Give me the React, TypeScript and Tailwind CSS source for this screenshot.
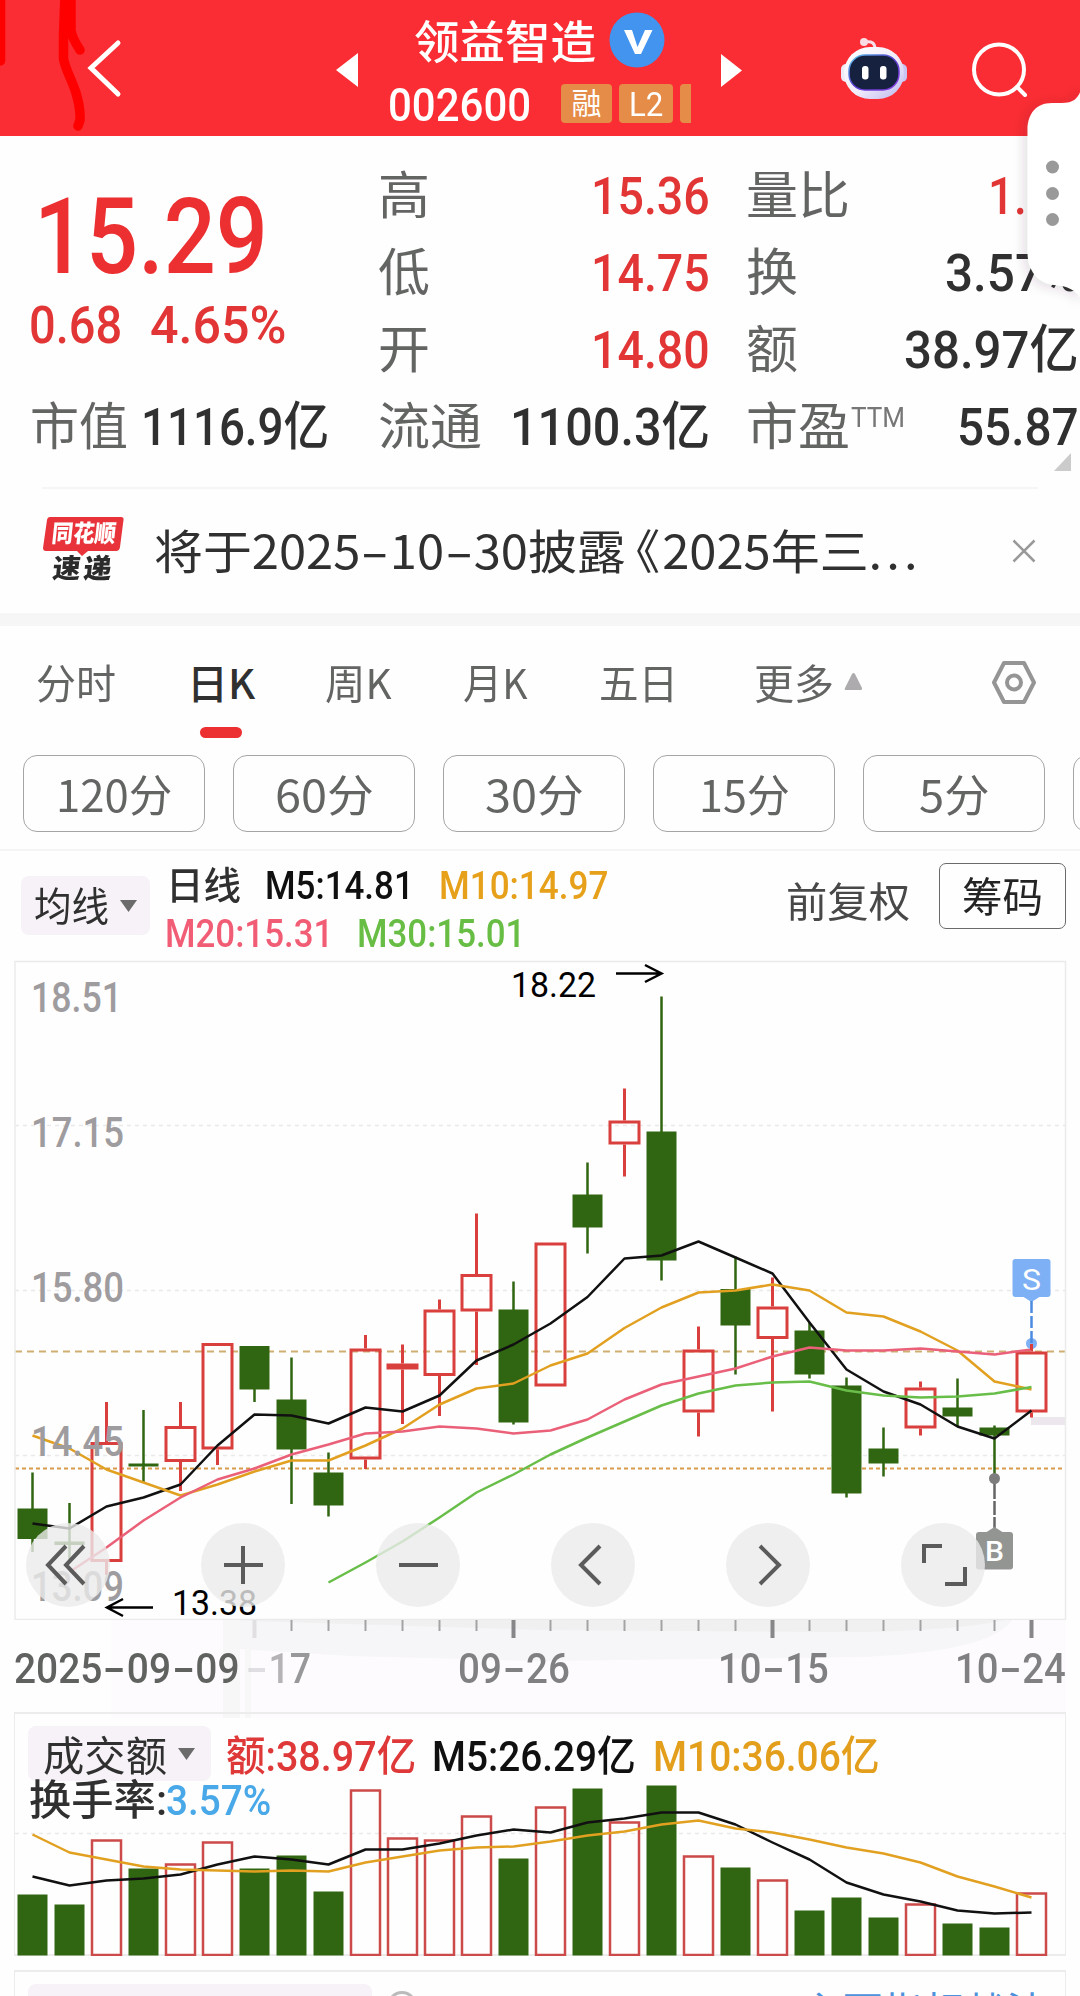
import React, { useLayoutEffect, useRef, useState } from "react";

const NUM = "font-['Roboto','Noto_Sans_CJK_SC',sans-serif]";

/* Text squeezed or stretched horizontally to an exact width. */
function Fit({ w, className = "", children }: { w: number; className?: string; children: React.ReactNode }) {
  const ref = useRef<HTMLSpanElement>(null);
  const [k, setK] = useState(1);
  useLayoutEffect(() => {
    if (ref.current) setK(w / ref.current.offsetWidth);
  }, [w]);
  return (
    <span className={"flex shrink-0 whitespace-nowrap " + className} style={{ width: w }}>
      <span ref={ref} className="block shrink-0 origin-left" style={{ transform: `scaleX(${k})` }}>
        {children}
      </span>
    </span>
  );
}

const Dash = () => <span className="mx-[6px] inline-block scale-x-[1.7]">-</span>;

type Candle = [up: 0 | 1, top: number, bottom: number, high: number, low: number];
const candles: Candle[] = [
  [0, 1508.5, 1539, 1472.5, 1552],
  [0, 1541.5, 1545, 1503, 1560],
  [1, 1442, 1562, 1402, 1575],
  [0, 1463.5, 1466.5, 1410, 1482],
  [1, 1426, 1462, 1402, 1491],
  [1, 1343, 1449.5, 1343, 1465],
  [0, 1346, 1389.5, 1346, 1402],
  [0, 1399.5, 1449.5, 1357.5, 1504],
  [0, 1472.5, 1505.5, 1452.5, 1516.5],
  [1, 1348.5, 1459.5, 1335, 1469],
  [1, 1363.5, 1369.5, 1344.5, 1424],
  [1, 1309.5, 1376, 1299.5, 1416],
  [1, 1274, 1311.5, 1213.5, 1365],
  [0, 1309.5, 1422.5, 1281.5, 1424.5],
  [1, 1242.5, 1386.5, 1242.5, 1386.5],
  [0, 1194.5, 1227.5, 1162.5, 1253.5],
  [1, 1120.5, 1144.5, 1088.5, 1176.5],
  [0, 1131.5, 1260.5, 996.5, 1280.5],
  [1, 1349.5, 1412.5, 1326.5, 1436.5],
  [0, 1289, 1325.5, 1256.5, 1374.5],
  [1, 1306.5, 1339, 1277.5, 1411.5],
  [0, 1330.5, 1374.5, 1323, 1378.5],
  [0, 1385.5, 1493.5, 1377.5, 1497.5],
  [0, 1448.5, 1463.5, 1427.5, 1476.5],
  [1, 1387.5, 1428.5, 1381.5, 1435.5],
  [0, 1407.5, 1416.5, 1378.5, 1426.5],
  [0, 1427.5, 1435.5, 1425.5, 1478],
  [1, 1351.5, 1412.5, 1343, 1417.5],
];
const m5 = [1523.5, 1528.5, 1506.5, 1497.5, 1484.5, 1445.5, 1414.5, 1415.5, 1423.5, 1407.5, 1411.5, 1395.5, 1360.5, 1344.5, 1323.5, 1297, 1258.5, 1255.5, 1241.5, 1257.5, 1273.5, 1322.5, 1369.5, 1391.5, 1404.5, 1426.5, 1438.5, 1410.5];
const m10 = [1435.5, 1448.5, 1469.5, 1482.5, 1495.5, 1484.5, 1471.5, 1460.5, 1460.5, 1445.5, 1428.5, 1404.5, 1388.5, 1383.5, 1365.5, 1353.5, 1328, 1307.5, 1292.5, 1290.5, 1284.5, 1290.5, 1312.5, 1316.5, 1331.5, 1350.5, 1381.5, 1389.5];
const m20 = [1572, 1547.5, 1520.5, 1497.5, 1479.5, 1468.5, 1454.5, 1444.5, 1433.5, 1431.5, 1426.5, 1428.5, 1433.5, 1430.5, 1419.5, 1399.5, 1384.5, 1376.5, 1368.5, 1356.5, 1347.5, 1350.5, 1350.5, 1348.5, 1351.5, 1354.5, 1349.5];
const m30 = [1582.5, 1562.5, 1541.5, 1517.5, 1492.5, 1474.5, 1454.5, 1437.5, 1421.5, 1405.5, 1393.5, 1385.5, 1382.5, 1381.5, 1390.5, 1395.5, 1397.5, 1396.5, 1393.5, 1387];
const volTops = [1894.5, 1904.5, 1839.5, 1868.5, 1863.5, 1841.5, 1868.5, 1855.5, 1891.5, 1789.5, 1837.5, 1839.5, 1815.5, 1858.5, 1806.5, 1788.5, 1821.5, 1785.5, 1855.5, 1867.5, 1879.5, 1910.5, 1897.5, 1917.5, 1903.5, 1923.5, 1927.5, 1892.5];
const v5 = [1876.5, 1885.5, 1880.5, 1878.5, 1874.5, 1864.5, 1856.5, 1859.5, 1864.5, 1849.5, 1849.5, 1843.5, 1835.5, 1829.5, 1832.5, 1822.5, 1818.5, 1812.5, 1812.5, 1824.5, 1842.5, 1859.5, 1882.5, 1894.5, 1901.5, 1910.5, 1913.5, 1912.5];
const v10 = [1834.5, 1852.5, 1859.5, 1866.5, 1869.5, 1870.5, 1871.5, 1870.5, 1871.5, 1862.5, 1856.5, 1850.5, 1847.5, 1846.5, 1841.5, 1835.5, 1831.5, 1824.5, 1820.5, 1828.5, 1832.5, 1839.5, 1847.5, 1853.5, 1862.5, 1876.5, 1886.5, 1897.5];

const RED = "#d93f3d";
const GREEN = "#306611";
const cx = (i: number) => 32.5 + 37 * i;
const line = (ys: number[], from = 0) => ys.map((y, i) => `${cx(i + from)},${y}`).join(" ");

function Header() {
  return (
    <header className="relative flex h-[136px] shrink-0 overflow-hidden bg-[#f92d33] text-white">
      <svg className="absolute left-0 top-0" width="100" height="136" fill="none" stroke="#ff0000" strokeWidth="9.5" strokeLinecap="round" strokeLinejoin="round">
        <path d="M0.5 -5V61M65 -5L63.500 35V59C66 71 72 80 76 93C79 103 80.500 112 80 120L78 126M71 -5V31C73 40 77 45 80 50" />
        <path d="M68 -5V30" strokeWidth="12" />
      </svg>
      <svg className="relative ml-[84px] mt-[36px] shrink-0" width="42" height="66" fill="none" stroke="#fff" strokeWidth="5" strokeLinecap="round">
        <path d="M34 7L7 32L34 58" />
      </svg>
      <svg className="ml-[210px] mt-[53px] shrink-0" width="22" height="34" fill="#fff"><path d="M0 17L22 0V34Z" /></svg>
      <div className="ml-[30px] flex w-[306px] shrink-0 flex-col">
        <div className="flex h-[68px] items-center pl-[26px] pt-[10px]">
          <Fit w={182} className={NUM + " mt-[10px] text-[45px] font-medium leading-[50px]"}>领益智造</Fit>
          <svg className="ml-[13px]" width="56" height="57" viewBox="0 0 56 57">
            <circle cx="28" cy="29" r="27.500" fill="#4294ee" />
            <path d="M15 19H23L28.500 36L36 19H43.500L32 43H26Z" fill="#fff" />
          </svg>
        </div>
        <div className="mt-[16px] flex h-[39px] items-center">
          <Fit w={143} className={NUM + " mt-[2px] text-[47px] font-medium leading-[39px]"}>002600</Fit>
          <span className={NUM + " ml-[30px] flex h-[39px] w-[51px] items-center justify-center rounded-[4px] bg-[#e58c48] text-[30px] leading-none"}>融</span>
          <span className={NUM + " ml-[7px] flex h-[39px] w-[54px] items-center justify-center rounded-[4px] bg-[#e58c48] text-[34px] leading-none"}><Fit w={34}>L2</Fit></span>
          <span className="ml-[7px] h-[39px] w-[11px] rounded-l-[4px] bg-[#e58c48]" />
        </div>
      </div>
      <svg className="ml-[27px] mt-[54px] shrink-0" width="22" height="33" fill="#fff"><path d="M0 0L21 16.500L0 33Z" /></svg>
      <svg className="ml-[97px] mt-[36px] shrink-0" width="68" height="66" viewBox="0 0 68 66">
        <defs>
          <linearGradient id="head" x1="0" y1="0" x2="1" y2="1"><stop offset="0" stopColor="#fff" /><stop offset="0.55" stopColor="#f1ecfa" /><stop offset="1" stopColor="#b9b5ee" /></linearGradient>
          <linearGradient id="rim" x1="0" y1="0" x2="1" y2="1"><stop offset="0" stopColor="#57c6e8" /><stop offset="0.5" stopColor="#5a3bd0" /><stop offset="1" stopColor="#8a3fe0" /></linearGradient>
        </defs>
        <path d="M25 6Q35 4 35 13" fill="none" stroke="#f6dfe8" strokeWidth="3" />
        <circle cx="24" cy="6" r="4" fill="#fbdbe3" />
        <rect x="1" y="28" width="10" height="18" rx="5" fill="#eeeaf8" />
        <rect x="57" y="28" width="10" height="18" rx="5" fill="#c9c4f2" />
        <rect x="4" y="11" width="60" height="52" rx="26" fill="url(#head)" />
        <rect x="9" y="19" width="50" height="35" rx="16" fill="#16203f" stroke="url(#rim)" strokeWidth="1.500" />
        <rect x="22" y="30" width="6.500" height="13.500" rx="3" fill="#fff" />
        <rect x="40" y="30" width="6.500" height="13.500" rx="3" fill="#fff" />
      </svg>
      <svg className="ml-[63px] mt-[40px] shrink-0" width="60" height="60" fill="none" stroke="#fff" strokeWidth="4" strokeLinecap="round">
        <circle cx="28" cy="29.500" r="25" /><path d="M46 47L54 55" />
      </svg>
    </header>
  );
}

const label = NUM + " text-[#636563] text-[51px]";
const big = NUM + " text-[52px] font-medium";

function Row({ name, value, w, red, left }: { name: string; value: string; w: number; red?: boolean; left?: React.ReactNode }) {
  return (
    <div className="flex h-[77px] items-center justify-between leading-[77px]">
      <span className="flex"><Fit w={name.length * 52} className={label + " -ml-px"}>{name}</Fit>{left}</span>
      <Fit w={w} className={big + (red ? " text-[#e23535]" : " text-[#303030]")}>{value}</Fit>
    </div>
  );
}

function Quote() {
  return (
    <section className="flex h-[351px] shrink-0 overflow-hidden pt-[22px]">
      <div className="w-[379px] shrink-0 pl-[30px]">
        <Fit w={234} className={NUM + " ml-[4px] mt-[28px] h-[104px] text-[105px] font-medium leading-[104px] text-[#ec3031]"}>15.29</Fit>
        <div className="-ml-px mt-px flex h-[70px] items-center leading-[70px] text-[#e23535]">
          <Fit w={93} className={big}>0.68</Fit>
          <Fit w={136} className={big + " ml-[28px]"}>4.65%</Fit>
        </div>
        <div className="mt-[28px] flex h-[77px] items-center leading-[77px]">
          <Fit w={98} className={label}>市值</Fit>
          <Fit w={188} className={big + " ml-[13px] text-[#303030]"}>1116.9亿</Fit>
        </div>
      </div>
      <div className="w-[331px] shrink-0">
        <Row name="高" value="15.36" w={119} red />
        <Row name="低" value="14.75" w={119} red />
        <Row name="开" value="14.80" w={119} red />
        <Row name="流通" value="1100.3亿" w={200} />
      </div>
      <div className="ml-[37px] w-[332px] shrink-0">
        <Row name="量比" value="1.42" w={91} red />
        <Row name="换" value="3.57%" w={134} />
        <Row name="额" value="38.97亿" w={175} />
        <Row name="市盈" value="55.87" w={122} left={<Fit w={54} className={NUM + " -mt-[10px] ml-[1px] text-[28px] text-[#777]"}>TTM</Fit>} />
      </div>
    </section>
  );
}

function News() {
  return (
    <section className="relative mx-[42px] flex h-[126px] shrink-0 items-center border-t-2 border-[#f6f6f6]">
      <svg className="absolute -top-[36px] left-[1012px]" width="18" height="19" fill="#cbcbcb"><path d="M17 0V18H0Z" /></svg>
      <div className="relative -mt-[2px] h-[70px] w-[84px]">
        <svg className="absolute left-0 top-0" width="84" height="44" fill="#e8333a">
          <path d="M8 2H79Q82 2 81.500 5L78 32Q77.500 36 74 36H46L40 41L35 36H4Q1 36 1 33L5 5Q5.500 2 8 2Z" />
        </svg>
        <div className="relative flex h-[37px] -skew-x-6 items-center justify-center pt-[1px]">
          <Fit w={64} className={NUM + " text-[24px] font-black leading-[32px] text-white"}>同花顺</Fit>
        </div>
        <div className="flex h-[30px] -skew-x-6 items-center justify-center pt-[4px]">
          <Fit w={62} className={NUM + " text-[27px] font-black leading-[30px] tracking-[3px] text-[#2b2b2b]"}>速递</Fit>
        </div>
      </div>
      <Fit w={768} className="-mt-[5px] ml-[28px] font-['Noto_Sans_CJK_SC',sans-serif] text-[47px] leading-[60px] text-[#303030]">
        将于2025<Dash />10<Dash />30披露<span className="-ml-[14px] mr-[2px]">《</span>2025年三<span className="tracking-[4px]">...</span>
      </Fit>
      <svg className="ml-auto mr-[2px]" width="24" height="24" fill="none" stroke="#999" strokeWidth="2.500"><path d="M1.500 1.500L22.500 22.500M22.500 1.500L1.500 22.500" /></svg>
    </section>
  );
}

const tab = "font-['Noto_Sans_CJK_SC',sans-serif] text-[41px] leading-[60px]";

function Tabs() {
  return (
    <nav className="flex h-[129px] shrink-0 pl-[36px] pt-[25px] text-[#636563]">
      <Fit w={80} className={tab}>分时</Fit>
      <div className="relative ml-[71px]">
        <Fit w={68} className={tab + " font-medium text-[#303030]"}>日K</Fit>
        <span className="absolute left-[13px] top-[76px] h-[11px] w-[42px] rounded-full bg-[#ec3031]" />
      </div>
      <Fit w={67} className={tab + " ml-[70px]"}>周K</Fit>
      <Fit w={65} className={tab + " ml-[71px]"}>月K</Fit>
      <Fit w={79} className={tab + " ml-[71px]"}>五日</Fit>
      <Fit w={80} className={tab + " ml-[76px]"}>更多</Fit>
      <svg className="ml-[10px] mt-[21px]" width="20" height="20" fill="#aeabae"><path d="M8 2Q9.500 0 11 2L18 16Q18.500 18 17 18H2Q0 18 1 16Z" /></svg>
      <svg className="ml-[127px] mt-[9px]" width="46" height="46" fill="none" stroke="#959595" strokeWidth="4" strokeLinejoin="round">
        <path d="M13 3H33L43 22.500L33 42H13L3 22.500Z" /><circle cx="23" cy="22.500" r="7" />
      </svg>
    </nav>
  );
}

function Pills() {
  const items: [string, number][] = [["120分", 116], ["60分", 99], ["30分", 99], ["15分", 91], ["5分", 70]];
  return (
    <div className="flex h-[96px] shrink-0 gap-[28px] overflow-hidden border-b-2 border-[#f5f5f5] pl-[23px]">
      {items.map(([t, w]) => (
        <div key={t} className="flex h-[77px] w-[182px] shrink-0 justify-center rounded-[14px] border-[1.5px] border-[#a5a5a5] pt-[2px] font-['Noto_Sans_CJK_SC',sans-serif] text-[44px] leading-[70px] text-[#636563]">
          <Fit w={w}>{t}</Fit>
        </div>
      ))}
      <div className="h-[77px] w-[182px] shrink-0 rounded-[14px] border-[1.5px] border-[#a5a5a5]" />
    </div>
  );
}

const Caret = () => <svg width="17" height="12" fill="#6b6b6b"><path d="M0 0H17L8.500 12Z" /></svg>;

function MaBar() {
  const t = NUM + " text-[38px] font-medium leading-[46px]";
  return (
    <div className="flex h-[109px] shrink-0">
      <div className="ml-[21px] mt-[25px] flex h-[59px] w-[129px] items-center rounded-[8px] bg-[#f6f2f7] pl-[13px]">
        <Fit w={75} className={NUM + " mr-[11px] mt-[5px] text-[40px] leading-[50px] text-[#303030]"}>均线</Fit>
        <Caret />
      </div>
      <div className="ml-[16px] mt-[12px] w-[460px]">
        <div className="flex h-[47px]">
          <Fit w={75} className={t + " text-[#303030]"}>日线</Fit>
          <Fit w={149} className={t + " ml-[24px] text-[#101010]"}>M5:14.81</Fit>
          <Fit w={169} className={t + " ml-[25px] text-[#e6a01a]"}>M10:14.97</Fit>
        </div>
        <div className="flex h-[47px] pt-px">
          <Fit w={168} className={t + " -ml-px text-[#f25d76]"}>M20:15.31</Fit>
          <Fit w={168} className={t + " ml-[24px] text-[#68bd45]"}>M30:15.01</Fit>
        </div>
      </div>
      <Fit w={124} className={NUM + " ml-[160px] mt-[25px] text-[41px] leading-[54px] text-[#484848]"}>前复权</Fit>
      <div className={NUM + " ml-[29px] mt-[12px] flex h-[66px] w-[127px] justify-center rounded-[7px] border-[1.5px] border-[#6a6a6a] pt-px text-[41px] leading-[66px] text-[#242424]"}>
        <Fit w={81}>筹码</Fit>
      </div>
    </div>
  );
}

function Glyph({ x, y, w, size, fill, weight = 400, children }: { x: number; y: number; w: number; size: number; fill: string; weight?: number; children: string }) {
  return (
    <text x={x} y={y} textLength={w} lengthAdjust="spacingAndGlyphs" fontSize={size} fill={fill} fontWeight={weight} className={NUM}>
      {children}
    </text>
  );
}

const controls = [
  "M-2 -19L-20 0L-2 19M16 -19L-2 0L16 19",
  "M-19 0H20M0 -19V19",
  "M-19 0H20",
  "M7 -19L-12 0L7 19",
  "M-8 -19L11 0L-8 19",
  "M-1 -19H-19V-2M22 2V19H2",
];

function KChart() {
  return (
    <div className="relative h-[660px] shrink-0">
      <svg className="block" width="1080" height="660" viewBox="0 960 1080 660">
        <path d="M15 1125.500H1066M15 1290.500H1066M15 1455.500H1066" stroke="#e9e9e9" strokeWidth="1.500" strokeDasharray="4 4" />
        <path d="M15 1351.500H1066" stroke="#cfae72" strokeWidth="1.800" strokeDasharray="7 5" />
        <path d="M15 1468.500H1066" stroke="#d79a4b" strokeWidth="2" strokeDasharray="4 3" />
        <rect x="1031" y="1417" width="34" height="8" fill="#ebe7ec" />
        {candles.map(([up, t, b, h, l], i) => {
          const c = cx(i);
          if (!up)
            return (
              <g key={i} fill={GREEN}>
                <rect x={c - 1.25} y={h} width="2.500" height={l - h} />
                <rect x={c - 15} y={t} width="30" height={b - t} />
              </g>
            );
          return (
            <g key={i} stroke={RED} strokeWidth="3" fill="none">
              <path d={`M${c} ${h}V${t}M${c} ${b}V${l}`} />
              <rect x={c - 14.5} y={t + 1.5} width="29" height={b - t - 3} fill={b - t < 8 ? RED : "none"} />
            </g>
          );
        })}
        <g fill="none" strokeWidth="2.500" strokeLinejoin="round">
          <polyline points={line(m5)} stroke="#111" />
          <polyline points={line(m10)} stroke="#e2a021" />
          <polyline points={line(m20, 1)} stroke="#ea6078" />
          <polyline points={line(m30, 8)} stroke="#68be48" />
        </g>
        <Glyph x={31} y={1012} w={91} size={42} weight={500} fill="#9e9c9e">18.51</Glyph>
        <Glyph x={31} y={1147} w={93} size={42} weight={500} fill="#9e9c9e">17.15</Glyph>
        <Glyph x={31} y={1301.5} w={93} size={42} weight={500} fill="#9e9c9e">15.80</Glyph>
        <Glyph x={31} y={1455.5} w={93} size={42} weight={500} fill="#9e9c9e">14.45</Glyph>
        <Glyph x={31} y={1600.5} w={93} size={42} weight={500} fill="#9e9c9e">13.09</Glyph>
        <Glyph x={511} y={996.5} w={85} size={35.5} fill="#000">18.22</Glyph>
        <Glyph x={172} y={1615} w={85} size={35.5} fill="#000">13.38</Glyph>
        <path d="M616 973.500H661M645 965L661.500 973.500L645 982M153 1607.500H108M123 1599L107 1607.500L123 1616" fill="none" stroke="#000" strokeWidth="2.500" />
        <g fill="#7eb0f6">
          <rect x="1012.500" y="1259" width="38" height="38" rx="3" /><path d="M1022 1296H1041L1031.500 1302Z" />
          <circle cx="1031.500" cy="1343.500" r="5.500" />
        </g>
        <path d="M1031.500 1301V1343" stroke="#4b8be0" strokeWidth="2.500" strokeDasharray="12 3" />
        <path d="M1031.500 1344V1350" stroke={RED} strokeWidth="3" />
        <Glyph x={1022} y={1289.5} w={19} size={29} fill="#fff">S</Glyph>
        <path d="M994.500 1479V1530" stroke="#666" strokeWidth="2.500" strokeDasharray="20 2 14 2" />
        <circle cx="994.500" cy="1478.500" r="5.500" fill="#7d7d7d" />
        <g fill="#939593"><rect x="976" y="1532" width="37" height="37.500" rx="3" /><path d="M985 1533L994.500 1527L1004 1533Z" /></g>
        <Glyph x={985} y={1561} w={19} size={28} weight={500} fill="#fff">B</Glyph>
        <rect x="15" y="961.500" width="1050.500" height="658" fill="none" stroke="#ebebeb" strokeWidth="1.500" />
      </svg>
      <div className="absolute left-[26px] top-[563px] flex gap-[91px]">
        {controls.map((d, i) => (
          <button key={i} className="flex size-[84px] items-center justify-center rounded-full bg-[#ebebeb]/80">
            <svg width="60" height="60" viewBox="-30 -30 60 60" fill="none" stroke="#5b5b5b" strokeWidth="4"><path d={d} /></svg>
          </button>
        ))}
      </div>
    </div>
  );
}

function Axis() {
  const t = NUM + " text-[42px] font-medium leading-[60px]";
  return (
    <div className="relative h-[92px] shrink-0">
      <svg className="absolute left-0 top-0" width="1080" height="98" viewBox="0 1620 1080 98">
        <path d="M111 1620H1066V1718H111Z" fill="#fefbff" />
        <path d="M223 1620H1012Q990 1652 860 1657L540 1661L350 1656L223 1648Z" fill="#f6f5f7" />
        <path d="M223 1620H1005Q960 1630 860 1632L540 1630Z" fill="#f0f0f1" />
        <path d="M223 1620H240V1718H223ZM245 1650H251V1718H245Z" fill="#f6f7f6" />
        {Array.from({ length: 22 }, (_, k) => k + 6).map((i) =>
          i % 7 === 6 ? (
            <rect key={i} x={cx(i) - 2} y="1620" width="4" height="18" fill={i === 6 ? "#e2dfe2" : "#87878a"} />
          ) : (
            <rect key={i} x={cx(i) - 1} y="1620" width="2" height="11" fill="#a3a3a5" />
          )
        )}
      </svg>
      <div className="relative flex pt-[19px]">
        <Fit w={226} className={t + " ml-[14px] text-[#606260]"}>2025<Dash />09<Dash />09</Fit>
        <Fit w={66} className={t + " ml-[5px] text-[#b5b3b6]"}><span className="opacity-40"><Dash /></span>1<span className="text-[#98979a]">7</span></Fit>
        <Fit w={112} className={t + " ml-[147px] text-[#808083]"}>09<Dash />26</Fit>
        <Fit w={111} className={t + " ml-[148px] text-[#808083]"}>10<Dash />15</Fit>
        <Fit w={111} className={t + " ml-[126px] text-[#808083]"}>10<Dash />24</Fit>
      </div>
    </div>
  );
}

function Volume() {
  const t = NUM + " text-[42px] font-medium leading-[56px]";
  return (
    <div className="relative mx-[14px] h-[244px] w-[1052px] shrink-0 border-x-[1.5px] border-y-2 border-[#ececec]">
      <svg className="absolute -left-[15px] -top-[2px]" width="1080" height="244" viewBox="0 1712 1080 244">
        <path d="M15 1833.500H1066" stroke="#e9e9e9" strokeWidth="1.500" strokeDasharray="4 4" />
        {volTops.map((y, i) =>
          candles[i][0] ? (
            <rect key={i} x={cx(i) - 14.5} y={y + 1} width="29" height={1954.5 - y - 0.5} fill="none" stroke="#cc4a49" strokeWidth="2.500" />
          ) : (
            <rect key={i} x={cx(i) - 15} y={y} width="30" height={1955.5 - y} fill={GREEN} />
          )
        )}
        <g fill="none" strokeWidth="2.500" strokeLinejoin="round">
          <polyline points={line(v5)} stroke="#111" />
          <polyline points={line(v10)} stroke="#e2a021" />
        </g>
      </svg>
      <div className="relative flex pl-[13px] pt-[12px]">
        <div className="flex h-[55px] w-[183px] items-center rounded-[8px] bg-[#f6f2f7] pl-[15px]">
          <Fit w={124} className={NUM + " mr-[11px] mt-[6px] text-[41px] font-normal leading-[50px] text-[#303030]"}>成交额</Fit>
          <Caret />
        </div>
        <Fit w={190} className={t + " ml-[15px] mt-[3px] text-[#df3838]"}>额:38.97亿</Fit>
        <Fit w={204} className={t + " ml-[16px] mt-[3px] text-[#101010]"}>M5:26.29亿</Fit>
        <Fit w={227} className={t + " ml-[17px] mt-[3px] text-[#e39f1c]"}>M10:36.06亿</Fit>
      </div>
      <div className="relative -mt-[12px] flex pl-[14px]">
        <Fit w={138} className={t + " text-[#303030]"}>换手率:</Fit>
        <Fit w={105} className={t + " -ml-px text-[#48a8e8]"}>3.57%</Fit>
      </div>
    </div>
  );
}

function NextPanel() {
  return (
    <div className="mx-[14px] mt-[14px] flex h-[26px] shrink-0 overflow-hidden border-x-[1.5px] border-t-2 border-[#ececec] pl-[13px]">
      <div className="mt-[12px] h-[40px] w-[344px] shrink-0 rounded-t-[8px] bg-[#f6f2f7]" />
      <svg className="ml-[15px] mt-[18px] shrink-0" width="30" height="30" fill="none" stroke="#bbb" strokeWidth="3"><circle cx="15" cy="16" r="13.500" /></svg>
      <span className={NUM + " ml-[384px] mt-[16px] shrink-0 text-[41px] leading-[50px] text-[#4d92dc]"}>主页指标战法</span>
    </div>
  );
}

function SideHandle() {
  return (
    <svg className="absolute left-[990px] top-[70px]" width="90" height="250" viewBox="990 70 90 250">
      <defs><filter id="soft" x="-50%" y="-20%" width="200%" height="140%"><feDropShadow dx="-3" dy="2" stdDeviation="6" floodColor="#443344" floodOpacity="0.16" /></filter></defs>
      <path filter="url(#soft)" d="M1082 86C1079 99 1073 103 1062 103H1052C1036 103 1027.500 114 1027.500 130V252C1027.500 270 1037 283 1054 285C1068 286 1076 290 1082 300Z" fill="#fff" />
      <g fill="#999"><circle cx="1052.500" cy="167" r="6.500" /><circle cx="1052.500" cy="193.500" r="6.500" /><circle cx="1052.500" cy="219.500" r="6.500" /></g>
    </svg>
  );
}

export default function App() {
  return (
    <main className="relative flex h-[1996px] w-[1080px] flex-col overflow-hidden bg-[#fefefe]">
      <Header />
      <Quote />
      <News />
      <div className="h-[13px] shrink-0 bg-[#f6f6f6]" />
      <Tabs />
      <Pills />
      <MaBar />
      <KChart />
      <Axis />
      <Volume />
      <NextPanel />
      <SideHandle />
    </main>
  );
}
